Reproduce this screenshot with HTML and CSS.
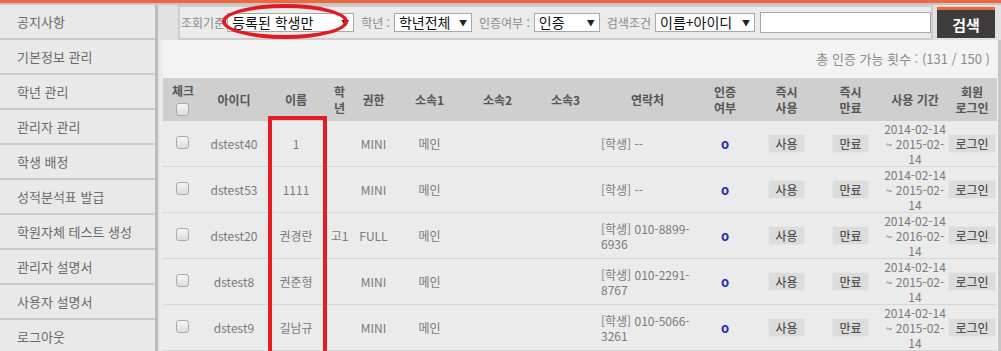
FILE: index.html
```html
<!DOCTYPE html>
<html lang="ko">
<head>
    <meta charset="UTF-8">
    <title>학생 관리</title>
    <link rel="stylesheet" href="styles.css">
</head>
<body>
    <div class="topbar"></div>
    <div class="layout">
        <ul class="sidebar">
            <li>공지사항</li>
            <li>기본정보 관리</li>
            <li>학년 관리</li>
            <li>관리자 관리</li>
            <li>학생 배정</li>
            <li>성적분석표 발급</li>
            <li>학원자체 테스트 생성</li>
            <li>관리자 설명서</li>
            <li>사용자 설명서</li>
            <li>로그아웃</li>
        </ul>
        <div class="main">
            <div class="filter-row">
                <div class="filter-box">
                    <span class="label">조회기준</span>
                    <span class="select sel-type">등록된 학생만<i>▼</i></span>
                    <span class="label">학년 :</span>
                    <span class="select sel-grade">학년전체<i>▼</i></span>
                    <span class="label">인증여부 :</span>
                    <span class="select sel-auth">인증<i>▼</i></span>
                    <span class="label">검색조건</span>
                    <span class="select sel-key">이름+아이디<i>▼</i></span>
                    <span class="search-input"></span>
                </div>
                <button class="search-btn">검색</button>
            </div>
            <div class="board">
                <div class="count">총 인증 가능 횟수 : (131 / 150 )</div>
                <table class="list">
                    <colgroup>
                        <col class="c-check"><col class="c-id"><col class="c-name"><col class="c-grade">
                        <col class="c-role"><col class="c-org"><col class="c-org2"><col class="c-org">
                        <col class="c-tel"><col class="c-auth"><col class="c-use"><col class="c-end">
                        <col class="c-period"><col class="c-login">
                    </colgroup>
                    <thead>
                        <tr>
                            <th>체크<br><span class="chk"></span></th>
                            <th>아이디</th>
                            <th>이름</th>
                            <th>학<br>년</th>
                            <th>권한</th>
                            <th>소속1</th>
                            <th>소속2</th>
                            <th>소속3</th>
                            <th>연락처</th>
                            <th>인증<br>여부</th>
                            <th>즉시<br>사용</th>
                            <th>즉시<br>만료</th>
                            <th>사용 기간</th>
                            <th>회원<br>로그인</th>
                        </tr>
                    </thead>
                    <tbody>
                        <tr>
                            <td><span class="chk"></span></td>
                            <td>dstest40</td>
                            <td>1</td>
                            <td></td>
                            <td>MINI</td>
                            <td>메인</td>
                            <td></td>
                            <td></td>
                            <td class="tel">[학생] --</td>
                            <td><span class="ok">o</span></td>
                            <td><span class="btn">사용</span></td>
                            <td><span class="btn">만료</span></td>
                            <td>2014-02-14<br>~ 2015-02-<br>14</td>
                            <td><span class="btn">로그인</span></td>
                        </tr>
                        <tr>
                            <td><span class="chk"></span></td>
                            <td>dstest53</td>
                            <td>1111</td>
                            <td></td>
                            <td>MINI</td>
                            <td>메인</td>
                            <td></td>
                            <td></td>
                            <td class="tel">[학생] --</td>
                            <td><span class="ok">o</span></td>
                            <td><span class="btn">사용</span></td>
                            <td><span class="btn">만료</span></td>
                            <td>2014-02-14<br>~ 2015-02-<br>14</td>
                            <td><span class="btn">로그인</span></td>
                        </tr>
                        <tr>
                            <td><span class="chk"></span></td>
                            <td>dstest20</td>
                            <td>권경란</td>
                            <td>고1</td>
                            <td>FULL</td>
                            <td>메인</td>
                            <td></td>
                            <td></td>
                            <td class="tel">[학생] 010-8899-<br>6936</td>
                            <td><span class="ok">o</span></td>
                            <td><span class="btn">사용</span></td>
                            <td><span class="btn">만료</span></td>
                            <td>2014-02-14<br>~ 2016-02-<br>14</td>
                            <td><span class="btn">로그인</span></td>
                        </tr>
                        <tr>
                            <td><span class="chk"></span></td>
                            <td>dstest8</td>
                            <td>권준형</td>
                            <td></td>
                            <td>MINI</td>
                            <td>메인</td>
                            <td></td>
                            <td></td>
                            <td class="tel">[학생] 010-2291-<br>8767</td>
                            <td><span class="ok">o</span></td>
                            <td><span class="btn">사용</span></td>
                            <td><span class="btn">만료</span></td>
                            <td>2014-02-14<br>~ 2015-02-<br>14</td>
                            <td><span class="btn">로그인</span></td>
                        </tr>
                        <tr>
                            <td><span class="chk"></span></td>
                            <td>dstest9</td>
                            <td>길남규</td>
                            <td></td>
                            <td>MINI</td>
                            <td>메인</td>
                            <td></td>
                            <td></td>
                            <td class="tel">[학생] 010-5066-<br>3261</td>
                            <td><span class="ok">o</span></td>
                            <td><span class="btn">사용</span></td>
                            <td><span class="btn">만료</span></td>
                            <td>2014-02-14<br>~ 2015-02-<br>14</td>
                            <td><span class="btn">로그인</span></td>
                        </tr>
                    </tbody>
                </table>
            </div>
        </div>
    </div>

    <div class="mark-ellipse"></div>
    <div class="mark-rect"></div>
</body>
</html>
```

FILE: styles.css
```css
body{
    margin: 0;
    width: 1001px;
    height: 351px;
    overflow: hidden;
    position: relative;
    background: #e4e4e4;
    font-family: "Noto Sans CJK KR", sans-serif;
    font-size: 12px;
}
.topbar{
    height: 3px;
    background: #ec6a3d;
    border-bottom: 2px solid #c6c6c6;
}
.layout{
    display: flex;
}
.sidebar{
    list-style: none;
    margin: 0;
    padding: 0;
    width: 155px;
    border-right: 3px solid #bcbcbc;
    background: #e9e9e9;
}
.sidebar li{
    height: 33px;
    line-height: 33px;
    padding-left: 17px;
    border-bottom: 2px solid #cbcbcb;
    color: #6a6a6a;
    font-size: 13px;
}
.main{
    flex: 1;
}
.filter-row{
    display: flex;
    height: 35px;
    padding-left: 20px;
    background: #e1e1e1;
}
.filter-box{
    flex: 1;
    display: flex;
    align-items: center;
    padding-left: 1px;
    border: 2px solid #cdcdcd;
    background: #ebebeb;
}
.label{
    color: #8a8a8a;
    font-size: 12px;
    margin: 0 4px 0 2px;
    white-space: nowrap;
}
.label:first-child{
    margin: 0 2px 0 0;
}
.select{
    display: flex;
    justify-content: space-between;
    align-items: center;
    box-sizing: border-box;
    height: 19px;
    padding: 0 4px 0 4px;
    margin-right: 5px;
    border: 1px solid #a8a8a8;
    background: #fff;
    color: #111;
    font-size: 14px;
    line-height: 17px;
}
.select i{
    font-style: normal;
    font-size: 8px;
    color: #222;
}
.sel-type{ width: 127px; }
.sel-grade{ width: 78px; }
.sel-auth{ width: 66px; }
.sel-key{ width: 100px; }
.search-input{
    box-sizing: border-box;
    width: 171px;
    height: 21px;
    border: 1px solid #a8a8a8;
    background: #fff;
}
.search-btn{
    width: 58px;
    height: 31px;
    margin: 2px 6px 0 4px;
    padding: 0;
    border: none;
    border-top: 3px solid #ea6a3a;
    background: #3d3b3b;
    color: #fff;
    font-family: "Noto Sans CJK KR", sans-serif;
    font-size: 15px;
    font-weight: bold;
}
.board{
    margin-left: 2px;
    border-left: 3px solid #ececec;
    border-right: 3px solid #c6c6c6;
    background: #f3f3f3;
}
.count{
    height: 38px;
    line-height: 38px;
    text-align: right;
    padding-right: 8px;
    color: #8a8a8a;
    font-size: 13px;
}
.list{
    width: 834px;
    border-collapse: collapse;
    table-layout: fixed;
}
.c-check{ width: 40px; }
.c-id{ width: 62px; }
.c-name{ width: 62px; }
.c-grade{ width: 25px; }
.c-role{ width: 43px; }
.c-org{ width: 69px; }
.c-org2{ width: 67px; }
.c-tel{ width: 95px; }
.c-auth{ width: 60px; }
.c-use{ width: 63px; }
.c-end{ width: 65px; }
.c-period{ width: 64px; }
.c-login{ width: 50px; }
.list th{
    height: 43px;
    padding: 0;
    background: #cfcfcf;
    color: #555;
    font-size: 12px;
    font-weight: bold;
    line-height: 16px;
}
.list td{
    height: 45px;
    padding: 0;
    background: #ebebeb;
    border-bottom: 1px solid #d6d6d6;
    color: #7a7a7a;
    font-size: 12px;
    line-height: 15px;
    text-align: center;
}
.list td.tel{
    text-align: left;
    padding-left: 1px;
}
.chk{
    display: inline-block;
    width: 11px;
    height: 11px;
    border: 1px solid #a9a9a9;
    border-radius: 3px;
    background: linear-gradient(#f6f6f6, #dcdcdc);
    vertical-align: middle;
}
.list td .chk{
    position: relative;
    top: -3px;
}
.ok{
    color: #2c2cb4;
    font-weight: bold;
    font-size: 13px;
}
.btn{
    display: inline-block;
    padding: 1px 6px;
    background: #dcdcdc;
    border: 1px solid #e6e6e6;
    color: #333;
    font-size: 12px;
    line-height: 15px;
}
.mark-ellipse{
    position: absolute;
    left: 222px;
    top: 4px;
    width: 126px;
    height: 35px;
    box-sizing: border-box;
    border: 4px solid #e11b22;
    border-radius: 50%;
}
.mark-rect{
    position: absolute;
    left: 268px;
    top: 116px;
    width: 59px;
    height: 240px;
    box-sizing: border-box;
    border: 4px solid #e21d25;
}
```
